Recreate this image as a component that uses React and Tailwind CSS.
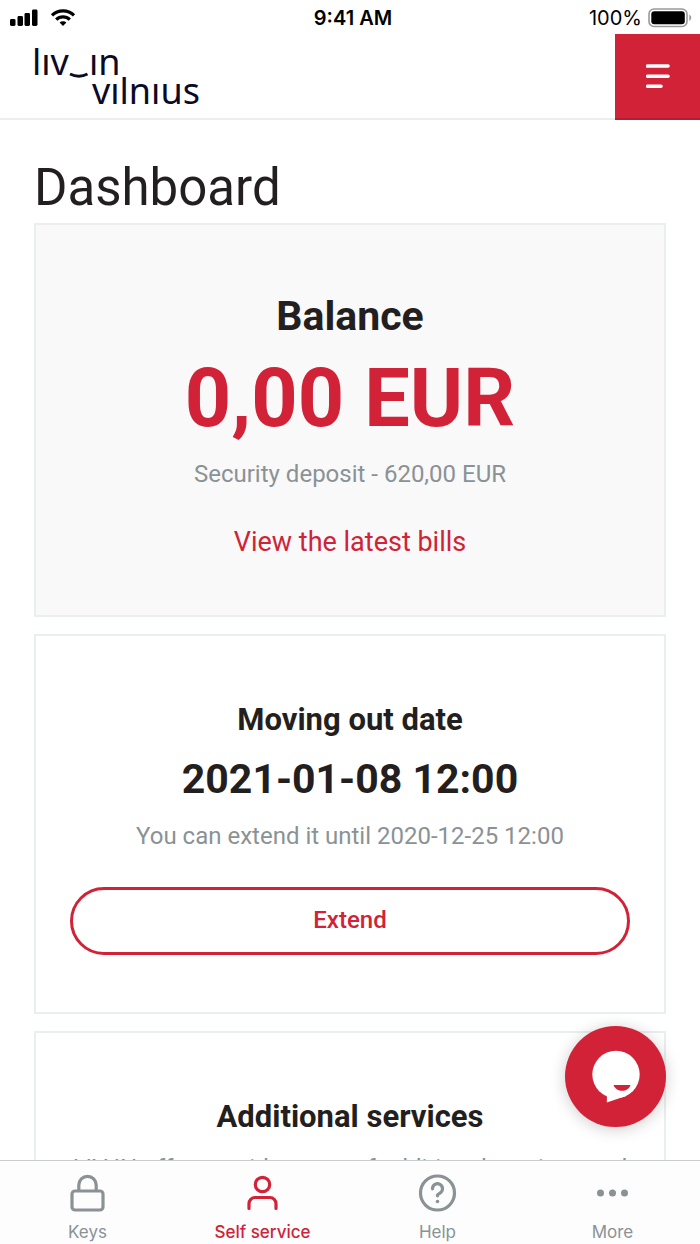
import React from 'react';

const tabs = [
  { id: 'keys', label: 'Keys', Icon: LockIcon },
  { id: 'self-service', label: 'Self service', Icon: PersonIcon, active: true },
  { id: 'help', label: 'Help', Icon: HelpIcon },
  { id: 'more', label: 'More', Icon: MoreIcon },
];

function LockIcon() {
  return (
    <svg width="40" height="40" viewBox="0 0 40 40" fill="none" stroke="currentColor" strokeWidth="3.2">
      <rect x="4" y="18" width="31" height="19" rx="3" />
      <path d="M10.8 18v-6a8.7 8.7 0 0 1 17.4 0v6" />
    </svg>
  );
}

function PersonIcon() {
  return (
    <svg width="40" height="40" viewBox="0 0 40 40" fill="none" stroke="currentColor" strokeWidth="3.2" strokeLinecap="round">
      <circle cx="19.5" cy="11.5" r="7.2" />
      <path d="M6 35.5v-5a6 6 0 0 1 6-6h15a6 6 0 0 1 6 6v5" />
    </svg>
  );
}

function HelpIcon() {
  return (
    <svg width="40" height="40" viewBox="0 0 40 40" fill="none" stroke="currentColor" strokeWidth="3.2" strokeLinecap="round">
      <circle cx="19.5" cy="20" r="17" />
      <path d="M14.5 15.8a5 5 0 1 1 7.6 4.2c-1.8 1-2.6 1.6-2.6 2.8" />
      <circle cx="19.5" cy="28.5" r="1.8" fill="currentColor" stroke="none" />
    </svg>
  );
}

function MoreIcon() {
  return (
    <svg width="40" height="40" viewBox="0 0 40 40" fill="currentColor">
      <circle cx="7.5" cy="20" r="3.5" />
      <circle cx="19.5" cy="20" r="3.5" />
      <circle cx="31.5" cy="20" r="3.5" />
    </svg>
  );
}

function StatusBar() {
  return (
    <div className="grid h-[34px] shrink-0 grid-cols-3 items-center pt-0.5 pr-2 pl-2.5 font-['Inter',sans-serif] text-xl text-black">
      <div className="flex items-center gap-3">
        <svg width="28" height="18" viewBox="0 0 28 18" fill="currentColor">
          <rect x="0" y="10" width="5.5" height="7" rx="1.4" />
          <rect x="7.5" y="7" width="5.5" height="10" rx="1.4" />
          <rect x="14.5" y="4" width="5.5" height="13" rx="1.4" />
          <rect x="22" y="0.5" width="5.5" height="16.5" rx="1.4" />
        </svg>
        <svg width="26" height="18" viewBox="0 0 26 18" fill="none" stroke="currentColor" strokeWidth="3.2">
          <path d="M2 6.4a15.6 15.6 0 0 1 22 0" />
          <path d="M6.2 10.7a9.6 9.6 0 0 1 13.6 0" />
          <path d="M13 17l-3.4-3.4a4.8 4.8 0 0 1 6.8 0z" fill="currentColor" stroke="none" />
        </svg>
      </div>
      <div className="pl-1 text-center font-semibold">9:41 AM</div>
      <div className="flex items-center justify-end gap-1.5">
        <span>100%</span>
        <svg width="44" height="20" viewBox="0 0 44 20">
          <rect x="1" y="1" width="38" height="17.5" rx="5" fill="none" stroke="#9a9a9a" strokeWidth="1.6" />
          <rect x="3.3" y="3.3" width="33.5" height="13" rx="3" fill="#000" />
          <path d="M41.3 6.5c2.6 1.5 2.6 5 0 6.5z" fill="#9a9a9a" />
        </svg>
      </div>
    </div>
  );
}

function Logo() {
  return (
    <a href="#" aria-label="liv_in vilnius" className="block pl-8 font-['Noto_Sans',sans-serif] text-[36px] leading-[29px] text-[#0b0b26]">
      <div className="flex items-end">
        <span>lıv</span>
        <svg className="-mb-1" width="20" height="12" viewBox="0 0 20 12" fill="none" stroke="currentColor" strokeWidth="3">
          <path d="M1 6q9 4.5 17.5 0" />
        </svg>
        <span>ın</span>
      </div>
      <div className="pl-[60px]">vılnıus</div>
    </a>
  );
}

function Header() {
  return (
    <header className="flex h-[86px] shrink-0 items-stretch justify-between">
      <div className="flex flex-1 items-center border-b-2 border-[#e9eeef]">
        <Logo />
      </div>
      <button type="button" aria-label="Menu" className="flex w-[85px] items-center justify-center border-b-2 border-[#b21f33] bg-[#d12237] text-white">
        <svg width="24" height="24" viewBox="0 0 24 24" fill="none" stroke="currentColor" strokeWidth="3.6" strokeLinecap="round">
          <path d="M1.5 2h20.5M1.5 12.2h20.5M1.5 22.2h13.5" />
        </svg>
      </button>
    </header>
  );
}

export default function App() {
  return (
    <div className="relative flex h-screen flex-col overflow-hidden bg-white font-['Roboto',sans-serif] text-[#231f20]">
      <StatusBar />
      <Header />

      <main className="flex min-h-0 flex-1 flex-col overflow-hidden px-[34px] pt-9">
        <h1 className="shrink-0 text-[51px] leading-[64px]">Dashboard</h1>

        <div className="mt-[3px] flex flex-col gap-[17px] text-center">
          {/* Balance */}
          <section className="border-2 border-[#e9eeef] bg-[#f9f9f9] px-[34px] pt-[67px] pb-[55px]">
            <h2 className="text-[41px] leading-[48px] font-bold">Balance</h2>
            <p className="text-[81px] leading-[118px] font-bold text-[#d12237]">0,00 EUR</p>
            <p className="text-2xl leading-[32px] text-[#8a9296]">Security deposit - 620,00 EUR</p>
            <a href="#" className="mt-[34px] block text-[27px] leading-[36px] text-[#d12237]">View the latest bills</a>
          </section>

          {/* Moving out */}
          <section className="border-2 border-[#e9eeef] px-[34px] pt-[66px] pb-[57px]">
            <h2 className="text-[31px] leading-[36px] font-bold">Moving out date</h2>
            <p className="text-[41px] leading-[82px] font-bold">2021-01-08 12:00</p>
            <p className="text-2xl leading-[32px] text-[#8a9296]">You can extend it until 2020-12-25 12:00</p>
            <button type="button" className="mt-[35px] h-[68px] w-full rounded-full border-[3px] border-[#d12237] pb-0.5 text-2xl font-medium text-[#d12237]">
              Extend
            </button>
          </section>

          {/* Additional services */}
          <section className="border-2 border-b-0 border-[#e9eeef] px-[34px] pt-[66px]">
            <h2 className="text-[31px] leading-[36px] font-bold">Additional services</h2>
            <p className="mt-[17px] text-2xl leading-[32px] text-[#8a9296]">LIV IN offers a wide range of additional services and</p>
          </section>
        </div>
      </main>

      <nav className="grid shrink-0 grid-cols-4 border-t border-[#c9cccd] bg-[#fdfdfd] pt-3 pb-px">
        {tabs.map(({ id, label, Icon, active }) => (
          <a
            key={id}
            href={`#${id}`}
            className={`flex flex-col items-center gap-2 font-['Inter',sans-serif] text-[17px] leading-[22px] ${active ? 'font-medium text-[#d12237]' : 'text-[#8a9296]'}`}
          >
            <Icon />
            <span>{label}</span>
          </a>
        ))}
      </nav>

      {/* Chat */}
      <button type="button" aria-label="Chat" className="absolute right-[34px] bottom-[117px] flex size-[101px] items-center justify-center rounded-full bg-[#d12237] shadow-[0_2px_16px_rgba(0,0,0,0.2)]">
        <svg width="52" height="54" viewBox="0 0 52 54">
          <circle cx="26" cy="24.5" r="23.7" fill="#fff" />
          <path d="M17 45l-.2 7.5L36 46z" fill="#fff" />
          <path d="M23.5 35h17c-2 7.5-14 8-17 0z" fill="#d12237" />
        </svg>
      </button>
    </div>
  );
}
